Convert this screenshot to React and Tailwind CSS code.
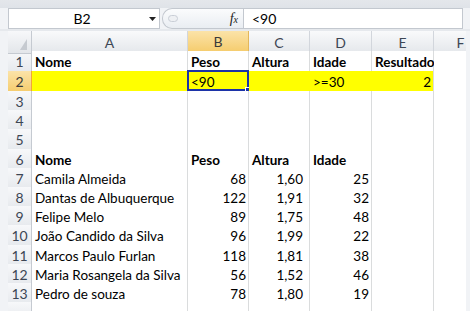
import React from "react";

const cols = ["A", "B", "C", "D", "E", "F"];

// row heights measured from the sheet (px, including the bottom gridline)
const heights = [20, 20, 19, 19, 20, 19, 19, 19, 19, 20, 19, 19, 19, 19];

const rows = [
  { cells: ["Nome", "Peso", "Altura", "Idade", "Resultado", ""], bold: true },
  { cells: ["", "<90", "", ">=30", "2", ""], fill: true },
  { cells: ["", "", "", "", "", ""] },
  { cells: ["", "", "", "", "", ""] },
  { cells: ["", "", "", "", "", ""] },
  { cells: ["Nome", "Peso", "Altura", "Idade", "", ""], bold: true },
  { cells: ["Camila Almeida", "68", "1,60", "25", "", ""] },
  { cells: ["Dantas de Albuquerque", "122", "1,91", "32", "", ""] },
  { cells: ["Felipe Melo", "89", "1,75", "48", "", ""] },
  { cells: ["João Candido da Silva", "96", "1,99", "22", "", ""] },
  { cells: ["Marcos Paulo Furlan", "118", "1,81", "38", "", ""] },
  { cells: ["Maria Rosangela da Silva", "56", "1,52", "46", "", ""] },
  { cells: ["Pedro de souza", "78", "1,80", "19", "", ""] },
  { cells: ["", "", "", "", "", ""] },
];

const isNum = (v) => /^[0-9][0-9,]*$/.test(v);

function FormulaBar() {
  return (
    <div className="flex h-[21px] items-stretch">
      <div className="ml-[8px] flex w-[152px] items-center border border-[#c3c8cf] bg-white">
        <span className="flex-1 pl-[6px] text-center text-[14px] leading-none text-black">B2</span>
        <svg width="7" height="4" viewBox="0 0 7 4" className="mr-[3px]">
          <path d="M0 0h7L3.5 4z" fill="#222" />
        </svg>
      </div>
      <div className="ml-[2px] flex w-[81px] items-center rounded-l-[10px] border border-r-0 border-[#c3c8cf] bg-gradient-to-b from-[#fbfcfd] to-[#e9edf2]">
        <span className="ml-[5px] h-[7px] w-[10px] rounded-full border border-[#c9ced6] bg-[#eef0f3]" />
        <span className="ml-auto mr-[5px] font-['Liberation_Serif',serif] text-[14px] italic leading-none text-[#222]">
          f<span className="text-[10px]">x</span>
        </span>
      </div>
      <div className="flex w-[220px] items-center border border-[#c3c8cf] bg-white pl-[8px] text-[14px] text-black">
        &lt;90
      </div>
    </div>
  );
}

function HeaderRow() {
  return (
    <div className="grid h-[20px] grid-cols-[24px_156px_61px_61px_62px_62px_54px]">
      <div className="relative border-r border-b border-[#c5cad1] bg-gradient-to-b from-[#f7f8fa] to-[#e3e6ea]">
        <svg width="7" height="11" viewBox="0 0 7 11" className="absolute right-[4px] bottom-[3px]">
          <path d="M7 0V11H0z" fill="#c6cad0" />
        </svg>
      </div>
      {cols.map((c) => (
        <div
          key={c}
          className={
            c === "B"
              ? "flex items-center justify-center border-r border-b-2 border-r-[#e3b75b] border-b-[#f0a53b] bg-gradient-to-b from-[#fbe3a8] to-[#f5cc6c] text-[14px] text-[#3a3a3a]"
              : "flex items-center justify-center border-r border-b border-[#d2d6dc] bg-gradient-to-b from-[#f9fafb] to-[#e4e7eb] text-[14px] text-[#3d4654]"
          }
        >
          {c}
        </div>
      ))}
    </div>
  );
}

function Row({ index, row, height }) {
  const sel = index === 2;
  const last = index === 14;
  return (
    <div
      className="grid grid-cols-[24px_156px_61px_61px_62px_62px_54px]"
      style={{ height }}
    >
      <div
        className={
          sel
            ? "flex items-center justify-center border-r border-b border-r-[#f0a53b] border-b-[#e3b75b] bg-gradient-to-b from-[#fbe3a8] to-[#f5cc6c] text-[14px] text-[#3a3a3a]"
            : "flex items-center justify-center border-r border-b border-[#c5cad1] bg-gradient-to-b from-[#f7f8fa] to-[#e6e9ed] text-[14px] text-[#3d4654]"
        }
      >
        {last ? "" : index}
      </div>
      {row.cells.map((v, ci) => {
        const filled = row.fill && ci < 5;
        const active = sel && ci === 1;
        return (
          <div
            key={ci}
            className={[
              "relative flex items-end overflow-visible whitespace-nowrap border-r border-b pb-[2px] text-[13.5px] leading-[16px] text-black",
              filled ? "bg-[#ffff00] border-[#ffff00]" : "bg-white border-[#dadcdd]",
              ci === 4 && filled ? "border-r-[#dadcdd]" : "",
              row.bold ? "font-bold" : "",
              isNum(v) ? "justify-end" : "justify-start",
              isNum(v) && ci === 2 ? "pr-[6px]" : isNum(v) ? "pr-[2px]" : "pl-[3px]",
            ].join(" ")}
          >
            {active && (
              <div className="absolute -left-[1px] -top-[1px] h-[21px] w-[62px] border-2 border-[#1c33a8]">
                <span className="absolute -right-[3px] -bottom-[3px] h-[5px] w-[5px] border border-white bg-[#1c33a8]" />
              </div>
            )}
            <span className="relative">{v}</span>
          </div>
        );
      })}
    </div>
  );
}

export default function App() {
  return (
    <div className="h-[311px] w-[470px] overflow-hidden bg-[#f1f3f6] font-['Lato','Liberation_Sans',sans-serif]">
      <div className="h-[8px] bg-gradient-to-b from-[#e4e7eb] to-[#dfe3e8]" />
      <FormulaBar />
      <div className="h-[2px] bg-[#e6e9ed]" />
      <div className="ml-[8px] w-[458px] overflow-hidden bg-white">
        <HeaderRow />
        {rows.map((r, i) => (
          <Row key={i} index={i + 1} row={r} height={heights[i]} />
        ))}
      </div>
    </div>
  );
}
